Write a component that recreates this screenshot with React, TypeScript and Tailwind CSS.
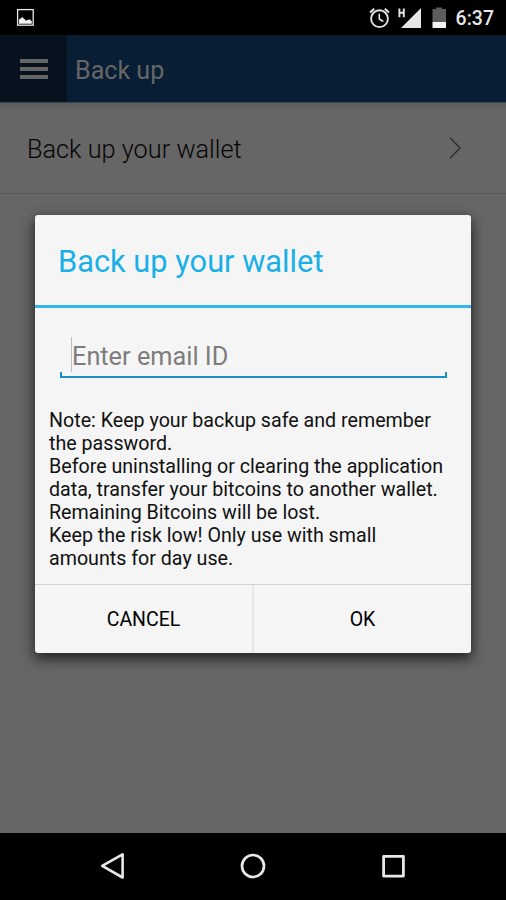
import { useState } from 'react';

function StatusBar() {
  return (
    <div className="flex h-[35px] shrink-0 items-center justify-between bg-black pr-[12px] pl-4">
      <svg width="19" height="19" viewBox="0 0 19 19" fill="none">
        <rect x="1.6" y="1.6" width="15.6" height="15.6" stroke="#e8e8e8" strokeWidth="1.3" />
        <path d="M3 15.8v-4l1-1.2 1-.2.8-1.1h1l.8 1.2 1 .4 1 1.5 1.2.2 1-1.1 1 .6 1-.9 1 1.4 1 .4v2.8z" fill="#f2f2f2" />
      </svg>
      <div className="flex items-center">
        <svg width="78" height="24" viewBox="0 0 78 24" fill="none">
          <circle cx="11.5" cy="12.7" r="8.4" stroke="#e6e6e6" strokeWidth="1.9" />
          <path d="M11.3 7.7v5.3l4 2.5" stroke="#e6e6e6" strokeWidth="1.6" />
          <path d="M2 6.5 6.2 2.8M21 6.5l-4.2-3.7" stroke="#e6e6e6" strokeWidth="2" />
          <path d="M31.4 2.5v8.7M35.8 2.5v8.7M31.4 6.8h4.4" stroke="#e6e6e6" strokeWidth="1.9" />
          <path d="M53 2v20H33z" fill="#e6e6e6" />
          <path d="M64.5 3h3.5V1.5h6V3h4v13H64.5z" fill="#5c5c5c" />
          <path d="M64.5 16H78v6H64.5z" fill="#f2f2f2" />
        </svg>
        <span className="ml-[10px] pt-[2px] text-[19.5px] leading-[23px] font-medium text-[#e6e6e6]">6:37</span>
      </div>
    </div>
  );
}

function AppHeader() {
  return (
    <header className="flex h-[67px] shrink-0 bg-[#081e35]">
      <button className="flex w-[67px] flex-col items-start justify-center gap-1 bg-[#06131f] pl-5" aria-label="Menu">
        <span className="h-1 w-7 bg-[#666]" />
        <span className="h-1 w-7 bg-[#666]" />
        <span className="h-1 w-7 bg-[#666]" />
      </button>
      <h1 className="pt-[21px] pl-2 text-[25.1px] leading-[30px] text-[#666]">Back up</h1>
    </header>
  );
}

function NavBar() {
  return (
    <nav className="flex h-[67px] shrink-0 items-center justify-around bg-black px-[43px] pb-px">
      <svg width="28" height="28" viewBox="0 0 28 28" fill="none" stroke="#e8e8e8" strokeWidth="2.6" strokeLinejoin="round">
        <path d="M23.6 2.3v23.2L3.2 13.9z" />
      </svg>
      <svg width="28" height="28" viewBox="0 0 28 28" fill="none" stroke="#e8e8e8" strokeWidth="2.7">
        <circle cx="14" cy="14" r="11" />
      </svg>
      <svg width="28" height="28" viewBox="0 0 28 28" fill="none" stroke="#e8e8e8" strokeWidth="2.8" strokeLinejoin="round">
        <rect x="4.6" y="4.3" width="19.8" height="19.8" />
      </svg>
    </nav>
  );
}

function BackupDialog() {
  const [email, setEmail] = useState('');

  return (
    <div className="absolute top-[215px] left-[35px] flex h-[437.5px] w-[436px] flex-col rounded-[3px] bg-[#f5f5f5] shadow-[0_5px_13px_1px_rgba(0,0,0,0.65)]">
      <h2 className="h-[90px] shrink-0 pt-[29px] pl-[23px] text-[30.8px] leading-9 text-[#19b0e7]">
        Back up your wallet
      </h2>
      <div className="h-[3px] shrink-0 bg-[#33b5e5]" />
      <div className="mt-[28px] ml-[24.5px] h-[42px] w-[387px] shrink-0">
        <div className="flex h-[37px] items-center pl-[11.5px]">
          <span className="h-[35px] w-px bg-[#bcbcbc]" />
          <input
            value={email}
            onChange={(e) => setEmail(e.target.value)}
            placeholder="Enter email ID"
            className="h-[35px] w-[350px] bg-transparent pt-[5px] text-[25.3px] text-[#222] outline-none placeholder:text-[#7d7d7d]"
          />
        </div>
        <div className="-mt-px h-[6px] border-x-2 border-b-2 border-[#1b8fc6]" />
      </div>
      <p className="mt-[31px] ml-[14px] text-[19.65px] leading-[23px] whitespace-nowrap text-[#111]">
        Note: Keep your backup safe and remember
        <br />
        the password.
        <br />
        Before uninstalling or clearing the application
        <br />
        data, transfer your bitcoins to another wallet.
        <br />
        Remaining Bitcoins will be lost.
        <br />
        Keep the risk low! Only use with small
        <br />
        amounts for day use.
      </p>
      <div className="mt-auto flex h-[68.5px] shrink-0 border-t border-[#d3d3d3] text-[19.5px] text-black">
        <button className="w-[219px] border-r-2 border-[#e6e6e6] pt-[2px]">CANCEL</button>
        <button className="flex-1 pt-[2px]">OK</button>
      </div>
    </div>
  );
}

export default function App() {
  return (
    <div className="relative flex h-[900px] w-[506px] flex-col overflow-hidden bg-[#666] font-['Roboto',sans-serif]">
      <StatusBar />
      <AppHeader />
      <main className="flex-1">
        <div className="h-[9px] border-t border-[#3c4651] bg-linear-to-b from-[#5c5c5c] to-[#666]" />
        <div className="flex h-[83px] items-center justify-between border-b border-[#5b5b5b] pr-[45px] pb-[7px] pl-[27px]">
          <span className="pt-[2px] text-[25.3px] leading-[30px] font-light text-[#050505]">Back up your wallet</span>
          <svg className="-mt-[2px]" width="12" height="22" viewBox="0 0 12 22" fill="none" stroke="#2c2c2c" strokeWidth="1.3">
            <path d="M1 .7 11 11 1 21.3" />
          </svg>
        </div>
      </main>
      <NavBar />
      <BackupDialog />
    </div>
  );
}
